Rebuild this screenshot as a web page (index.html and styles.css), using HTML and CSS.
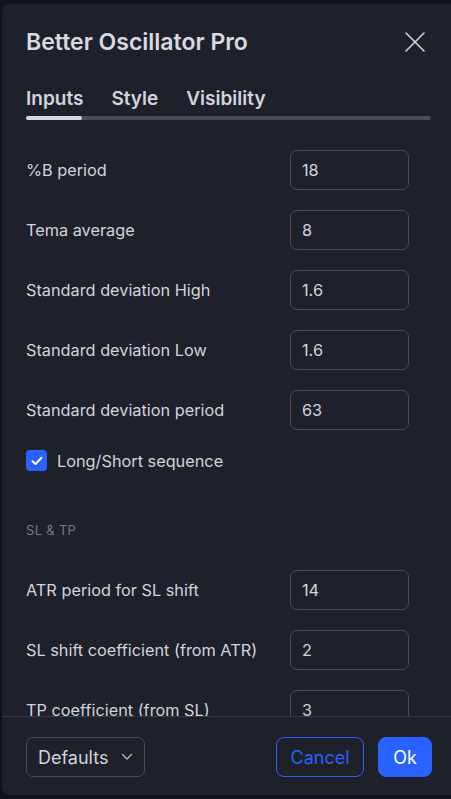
FILE: index.html
```html
<!DOCTYPE html>
<html lang="en">
<head>
  <meta charset="UTF-8" />
  <meta name="viewport" content="width=device-width, initial-scale=1.0"/>
  <title>Better Oscillator Pro</title>
  <link rel="stylesheet" href="styles.css">
</head>
<body>

  <div class="dialog">
    <header class="dialog-header">
      <h1>Better Oscillator Pro</h1>
      <button class="close-btn" aria-label="Close">
        <svg width="20" height="20" viewBox="0 0 20 20">
          <path d="M1 1 L19 19 M19 1 L1 19" stroke="#d1d4dc" stroke-width="1.6" stroke-linecap="round"/>
        </svg>
      </button>
    </header>

    <nav class="tabs">
      <div class="tab-list">
        <span class="tab active">Inputs</span>
        <span class="tab">Style</span>
        <span class="tab">Visibility</span>
      </div>
      <div class="tab-track"><div class="tab-indicator"></div></div>
    </nav>

    <main class="dialog-body">
      <div class="row">
        <span class="label">%B period</span>
        <div class="input">18</div>
      </div>
      <div class="row">
        <span class="label">Tema average</span>
        <div class="input">8</div>
      </div>
      <div class="row">
        <span class="label">Standard deviation High</span>
        <div class="input">1.6</div>
      </div>
      <div class="row">
        <span class="label">Standard deviation Low</span>
        <div class="input">1.6</div>
      </div>
      <div class="row">
        <span class="label">Standard deviation period</span>
        <div class="input">63</div>
      </div>
      <div class="check-row">
        <span class="checkbox">
          <svg width="12" height="10" viewBox="0 0 12 10">
            <path d="M1.5 5.2 L4.5 8 L10.5 1.8" fill="none" stroke="#fff" stroke-width="2" stroke-linecap="round" stroke-linejoin="round"/>
          </svg>
        </span>
        <span class="label">Long/Short sequence</span>
      </div>

      <div class="section-title">SL &amp; TP</div>

      <div class="row">
        <span class="label">ATR period for SL shift</span>
        <div class="input">14</div>
      </div>
      <div class="row">
        <span class="label">SL shift coefficient (from ATR)</span>
        <div class="input">2</div>
      </div>
      <div class="row">
        <span class="label">TP coefficient (from SL)</span>
        <div class="input">3</div>
      </div>
    </main>

    <footer class="dialog-footer">
      <button class="select-btn">
        Defaults
        <svg width="12" height="8" viewBox="0 0 12 8">
          <path d="M1.5 1.5 L6 6 L10.5 1.5" fill="none" stroke="#b2b5be" stroke-width="1.4" stroke-linecap="round" stroke-linejoin="round"/>
        </svg>
      </button>
      <div class="footer-actions">
        <button class="btn btn-outline">Cancel</button>
        <button class="btn btn-primary">Ok</button>
      </div>
    </footer>
  </div>

</body>
</html>
```

FILE: styles.css
```css
body {
  margin: 0;
  padding: 0;
  background: #121317;
  font-family: 'Inter', 'Noto Sans', sans-serif;
  color: #d1d4dc;
  overflow: hidden;
}

.dialog {
  margin: 4px 0 0 2px;
  height: 791px;
  background: #1e202a;
  border-radius: 8px 0 0 8px;
  display: flex;
  flex-direction: column;
  overflow: hidden;
}

/* Header */
.dialog-header {
  display: flex;
  justify-content: space-between;
  align-items: center;
  height: 36px;
  padding: 20px 26px 0 24px;
}

.dialog-header h1 {
  margin: 0;
  font-size: 23px;
  font-weight: 600;
  color: #d8dae1;
}

.close-btn {
  background: none;
  border: none;
  padding: 0;
  width: 20px;
  height: 20px;
  cursor: pointer;
}

/* Tabs */
.tabs {
  padding: 26px 20px 0 24px;
}

.tab-list {
  display: flex;
  gap: 28px;
  height: 24px;
  align-items: center;
}

.tab {
  font-size: 19px;
  font-weight: 600;
  color: #d1d4dc;
}

.tab-track {
  margin-top: 6px;
  height: 4px;
  border-radius: 2px;
  background: #4a4c56;
}

.tab-indicator {
  width: 56px;
  height: 4px;
  border-radius: 2px;
  background: #d6d8de;
}

/* Body */
.dialog-body {
  flex: 1;
  overflow: hidden;
  padding: 30px 42px 0 24px;
}

.row {
  display: flex;
  justify-content: space-between;
  align-items: center;
  height: 40px;
  margin-bottom: 20px;
}

.label {
  font-size: 16.3px;
  color: #d1d4dc;
}

.input {
  box-sizing: border-box;
  width: 119px;
  height: 40px;
  border: 1px solid #4a4c56;
  border-radius: 7px;
  padding-left: 11px;
  display: flex;
  align-items: center;
  font-size: 16.3px;
  color: #d1d4dc;
}

.check-row {
  display: flex;
  align-items: center;
  gap: 10px;
  height: 21px;
}

.checkbox {
  width: 21px;
  height: 21px;
  border-radius: 4px;
  background: #2962ff;
  display: flex;
  align-items: center;
  justify-content: center;
}

.section-title {
  margin: 51px 0 32px;
  height: 16px;
  line-height: 16px;
  font-size: 13px;
  color: #787b86;
  letter-spacing: 0.3px;
}

/* Footer */
.dialog-footer {
  border-top: 1px solid #3a3c46;
  padding: 20px 19px 18px 24px;
  display: flex;
  justify-content: space-between;
  align-items: center;
}

.select-btn {
  box-sizing: border-box;
  width: 119px;
  height: 40px;
  background: none;
  border: 1px solid #4a4c56;
  border-radius: 7px;
  padding: 0 11px;
  display: flex;
  justify-content: space-between;
  align-items: center;
  font-family: inherit;
  font-size: 18px;
  color: #d1d4dc;
}

.footer-actions {
  display: flex;
  gap: 14px;
}

.btn {
  box-sizing: border-box;
  height: 40px;
  border-radius: 8px;
  padding: 0;
  font-family: inherit;
  font-size: 18px;
  cursor: pointer;
}

.btn-outline {
  width: 88px;
  background: none;
  border: 1px solid #2962ff;
  color: #2962ff;
}

.btn-primary {
  width: 54px;
  background: #2962ff;
  border: 1px solid #2962ff;
  color: #fff;
}
```
